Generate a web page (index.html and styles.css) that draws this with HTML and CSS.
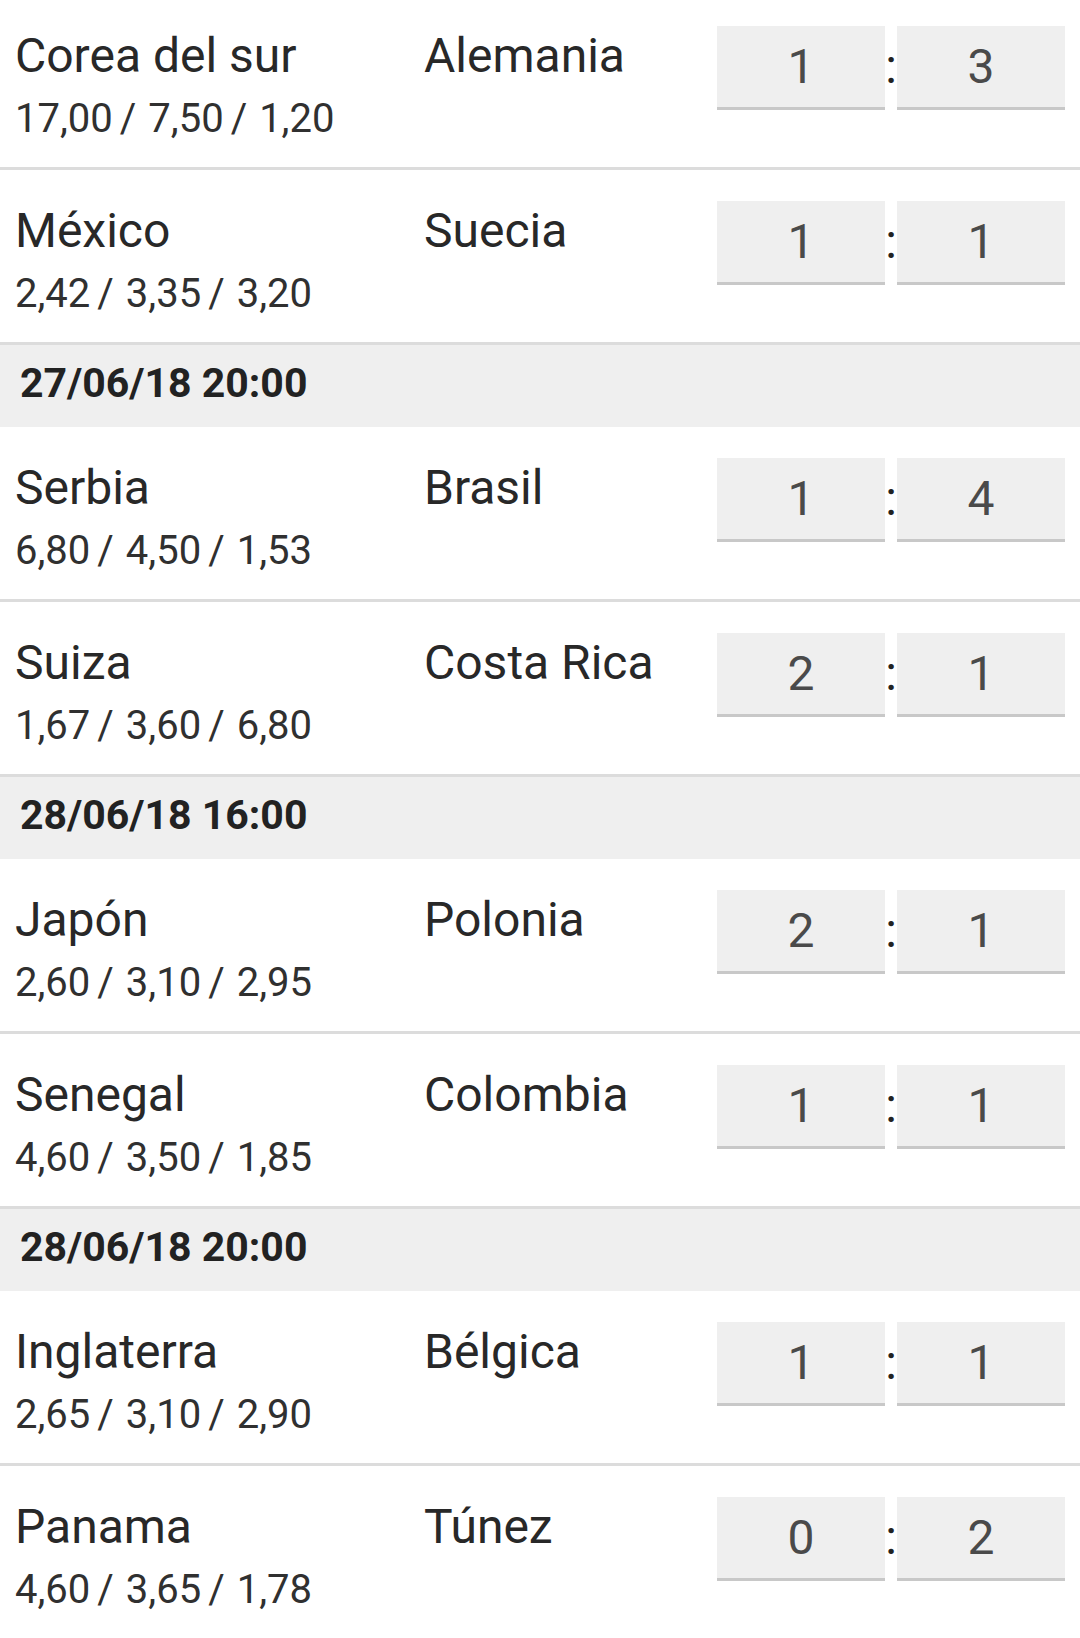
FILE: index.html
```html
<!DOCTYPE html>
<html lang="es">
<head>
  <meta charset="UTF-8">
  <meta name="viewport" content="width=device-width, initial-scale=1.0">
  <title>Pronósticos</title>
  <link rel="stylesheet" href="styles.css">
</head>
<body>
  <div class="list">
    <div class="match">
      <div class="home">
        <div class="team">Corea del sur</div>
        <div class="odds">17,00<span class="sl">/</span>7,50<span class="sl">/</span>1,20</div>
      </div>
      <div class="away"><div class="team">Alemania</div></div>
      <div class="score"><div class="goal">1</div><div class="sep">:</div><div class="goal">3</div></div>
    </div>
    <div class="match">
      <div class="home">
        <div class="team">México</div>
        <div class="odds">2,42<span class="sl">/</span>3,35<span class="sl">/</span>3,20</div>
      </div>
      <div class="away"><div class="team">Suecia</div></div>
      <div class="score"><div class="goal">1</div><div class="sep">:</div><div class="goal">1</div></div>
    </div>

    <div class="day">27/06/18 20:00</div>
    <div class="match">
      <div class="home">
        <div class="team">Serbia</div>
        <div class="odds">6,80<span class="sl">/</span>4,50<span class="sl">/</span>1,53</div>
      </div>
      <div class="away"><div class="team">Brasil</div></div>
      <div class="score"><div class="goal">1</div><div class="sep">:</div><div class="goal">4</div></div>
    </div>
    <div class="match">
      <div class="home">
        <div class="team">Suiza</div>
        <div class="odds">1,67<span class="sl">/</span>3,60<span class="sl">/</span>6,80</div>
      </div>
      <div class="away"><div class="team">Costa Rica</div></div>
      <div class="score"><div class="goal">2</div><div class="sep">:</div><div class="goal">1</div></div>
    </div>

    <div class="day">28/06/18 16:00</div>
    <div class="match">
      <div class="home">
        <div class="team">Japón</div>
        <div class="odds">2,60<span class="sl">/</span>3,10<span class="sl">/</span>2,95</div>
      </div>
      <div class="away"><div class="team">Polonia</div></div>
      <div class="score"><div class="goal">2</div><div class="sep">:</div><div class="goal">1</div></div>
    </div>
    <div class="match">
      <div class="home">
        <div class="team">Senegal</div>
        <div class="odds">4,60<span class="sl">/</span>3,50<span class="sl">/</span>1,85</div>
      </div>
      <div class="away"><div class="team">Colombia</div></div>
      <div class="score"><div class="goal">1</div><div class="sep">:</div><div class="goal">1</div></div>
    </div>

    <div class="day">28/06/18 20:00</div>
    <div class="match">
      <div class="home">
        <div class="team">Inglaterra</div>
        <div class="odds">2,65<span class="sl">/</span>3,10<span class="sl">/</span>2,90</div>
      </div>
      <div class="away"><div class="team">Bélgica</div></div>
      <div class="score"><div class="goal">1</div><div class="sep">:</div><div class="goal">1</div></div>
    </div>
    <div class="match">
      <div class="home">
        <div class="team">Panama</div>
        <div class="odds">4,60<span class="sl">/</span>3,65<span class="sl">/</span>1,78</div>
      </div>
      <div class="away"><div class="team">Túnez</div></div>
      <div class="score"><div class="goal">0</div><div class="sep">:</div><div class="goal">2</div></div>
    </div>
  </div>
</body>
</html>
```

FILE: styles.css
```css
html, body {
  margin: 0;
  padding: 0;
  background: #fff;
  overflow: hidden;
}
body {
  font-family: Roboto, "Noto Sans", Arial, sans-serif;
  color: #282828;
}
.list {
  margin-top: -5px;
}
.match {
  display: flex;
  height: 172px;
  padding: 0 15px;
  border-bottom: 3px solid #dcdcdc;
}
.home {
  width: 409px;
  padding-top: 33px;
}
.away {
  flex: 1;
  padding-top: 33px;
}
.team {
  font-size: 48px;
  line-height: 55px;
  white-space: nowrap;
}
.odds {
  margin-top: 12px;
  font-size: 40px;
  line-height: 47px;
  color: #303030;
  white-space: nowrap;
}
.sl {
  margin: 0 12px 0 7px;
}
.score {
  display: flex;
  align-items: flex-start;
  padding-top: 31px;
}
.goal {
  width: 168px;
  height: 81px;
  background: #efefef;
  border-bottom: 3px solid #c8c8c8;
  text-align: center;
  font-size: 48px;
  line-height: 81px;
  color: #4a4a4a;
}
.sep {
  width: 12px;
  text-align: center;
  font-size: 48px;
  line-height: 81px;
  color: #222;
}
.day {
  height: 76px;
  padding: 0 20px 6px;
  background: #efefef;
  font-size: 41px;
  font-weight: bold;
  line-height: 76px;
  color: #222;
}
```
